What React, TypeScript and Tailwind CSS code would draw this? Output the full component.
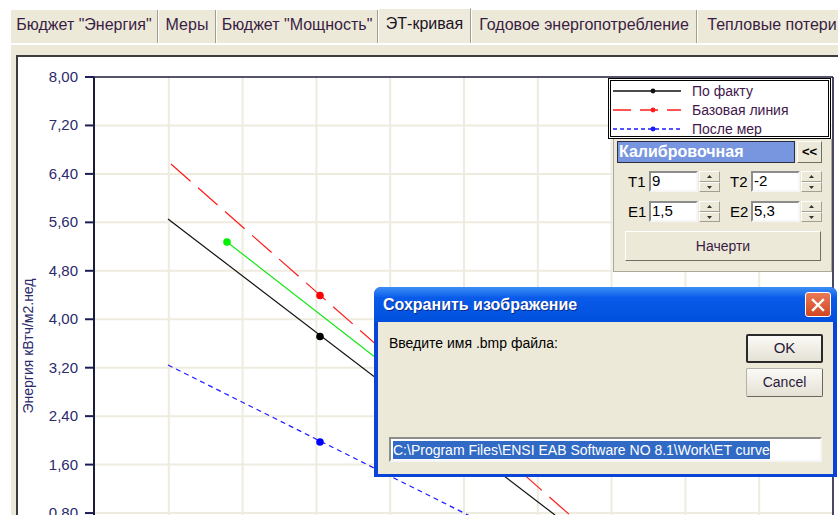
import React from 'react';

// tab strip of the report window
const tabs = [
  { label: 'Бюджет "Энергия"', w: 'w-[148px]' },
  { label: 'Меры', w: 'w-[58px]' },
  { label: 'Бюджет "Мощность"', w: 'w-[162px]' },
  { label: 'ЭТ-кривая', w: 'w-[93px]', active: true },
  { label: 'Годовое энергопотребление', w: 'w-[226px]' },
  { label: 'Тепловые потери', w: 'w-[150px]' },
];

const yTicks = ['8,00', '7,20', '6,40', '5,60', '4,80', '4,00', '3,20', '2,40', '1,60', '0,80'];

const PLOT_LEFT = 95;
const PLOT_TOP = 77;
const PLOT_RIGHT = 833;
const COL = 73.8;
const ROW = 48.45;

const EtChart: React.FC = () => (
  <svg width="830" height="470" viewBox="18 57 830 470" className="block">
    {/* grid */}
    {Array.from({ length: 9 }, (_, i) => (
      <line key={'v' + i} x1={PLOT_LEFT + COL * (i + 1)} y1={PLOT_TOP} x2={PLOT_LEFT + COL * (i + 1)} y2={530} stroke="#EEEBDF" strokeWidth={2} />
    ))}
    {Array.from({ length: 9 }, (_, i) => (
      <line key={'h' + i} x1={PLOT_LEFT} y1={PLOT_TOP + ROW * (i + 1)} x2={PLOT_RIGHT} y2={PLOT_TOP + ROW * (i + 1)} stroke="#EEEBDF" strokeWidth={2} />
    ))}

    {/* frame + axis */}
    <line x1={85} y1={PLOT_TOP} x2={PLOT_RIGHT} y2={PLOT_TOP} stroke="#1b1b3a" strokeWidth={1.6} />
    <line x1={PLOT_RIGHT} y1={PLOT_TOP} x2={PLOT_RIGHT} y2={530} stroke="#1b1b3a" strokeWidth={1.6} />
    <line x1={94} y1={PLOT_TOP} x2={94} y2={530} stroke="#1b1b3a" strokeWidth={2} />
    {yTicks.map((t, i) => (
      <g key={t}>
        <line x1={85} y1={PLOT_TOP + ROW * i} x2={94} y2={PLOT_TOP + ROW * i} stroke="#1d1d55" strokeWidth={2} />
        <text x={78} y={PLOT_TOP + ROW * i + 5} textAnchor="end" fontSize={15} fill="#2a2a6c" fontFamily="'Liberation Sans', Arial, sans-serif">
          {t}
        </text>
      </g>
    ))}
    <text x={33} y={346} transform="rotate(-90 33 346)" textAnchor="middle" fontSize={14} fill="#2a2a6c" fontFamily="'Liberation Sans', Arial, sans-serif">
      Энергия кВтч/м2.нед
    </text>

    {/* series */}
    <line x1={168} y1={219} x2={555} y2={515} stroke="#111" strokeWidth={1.2} />
    <line x1={171} y1={164} x2={571} y2={516} stroke="#ff1a1a" strokeWidth={1.2} strokeDasharray="26 10" />
    <line x1={227} y1={242} x2={470} y2={431} stroke="#12e812" strokeWidth={1.2} />
    <line x1={168} y1={365} x2={470} y2={516} stroke="#1a1aff" strokeWidth={1.2} strokeDasharray="5 4" />
    <circle cx={320} cy={336.5} r={3.8} fill="#000" />
    <circle cx={320} cy={295.5} r={3.8} fill="#ff0000" />
    <circle cx={227} cy={242} r={3.8} fill="#00f000" />
    <circle cx={320} cy={442} r={3.8} fill="#0000ff" />
  </svg>
);

const legend = [
  { label: 'По факту', color: '#111', dash: undefined },
  { label: 'Базовая линия', color: '#ff1a1a', dash: '18 9' },
  { label: 'После мер', color: '#1a1aff', dash: '4 3' },
];

const Spin: React.FC = () => (
  <div className="ml-[1px] flex h-[21px] w-[21px] flex-col">
    <div className="flex h-[11px] items-center justify-center border border-white border-r-[#a3a091] border-b-[#a3a091] bg-[#ECE9D8]">
      <svg width="5" height="3"><path d="M2.5 0L5 3H0z" fill="#333" /></svg>
    </div>
    <div className="flex h-[10px] items-center justify-center border border-white border-r-[#a3a091] border-b-[#a3a091] bg-[#ECE9D8]">
      <svg width="5" height="3"><path d="M0 0H5L2.5 3z" fill="#333" /></svg>
    </div>
  </div>
);

const Field: React.FC<{ label: string; value: string; first?: boolean }> = ({ label, value, first }) => (
  <div className={first ? 'flex items-center' : 'ml-[10px] flex items-center'}>
    <span className="w-[21px] text-[15px] leading-none text-black">{label}</span>
    <div className="flex h-[21px] w-[49px] items-center border-2 border-t-[#8d8d8d] border-l-[#8d8d8d] border-r-[#f6f6f6] border-b-[#f6f6f6] bg-white pl-[1px] text-[15px] text-black">
      {value}
    </div>
    <Spin />
  </div>
);

export default function App() {
  return (
    <div className="relative h-[515px] w-[838px] overflow-hidden bg-white font-['Liberation_Sans',Arial,sans-serif]">
      <div className="pl-[10px] pt-[8px]">
        {/* tabs */}
        <div className="flex h-[35px] items-end">
          {tabs.map((t) =>
            t.active ? (
              <div key={t.label} className={`${t.w} flex h-[35px] shrink-0 items-center justify-center border-l border-t border-white border-r border-r-[#a19e8e] bg-[#EEEBDD] pb-[4px] text-[16px] text-[#1c1424]`}>
                {t.label}
              </div>
            ) : (
              <div key={t.label} className={`${t.w} flex h-[33px] shrink-0 items-center justify-center border-l border-white border-r border-r-[#a19e8e] bg-[#ECE9D8] pb-[3px] text-[16px] text-[#3a1d44]`}>
                {t.label}
              </div>
            )
          )}
        </div>

        {/* tab page */}
        <div className="h-[480px] border-l border-t-2 border-white bg-[#ECE9D8] pl-[5px] pt-[10px]">
          <div className="relative h-[470px] w-[850px] border-2 border-[#3c3c3c] border-r-0 border-b-0 bg-white">
            <EtChart />

            {/* legend + calibration box */}
            <div className="absolute left-[590px] top-[21px] flex flex-col">
              <div className="h-[61px] w-[223px] border-[3px] border-double border-black bg-white">
                {legend.map((l) => (
                  <div key={l.label} className="flex h-[19px] items-center">
                    <svg width="68" height="8" className="ml-[2px]">
                      <line x1={0} y1={4} x2={68} y2={4} stroke={l.color} strokeWidth={1.3} strokeDasharray={l.dash} />
                      <circle cx={40} cy={4} r={2.4} fill={l.color} />
                    </svg>
                    <span className="ml-[11px] text-[14px] leading-none text-[#42184c]">{l.label}</span>
                  </div>
                ))}
              </div>
              <div className="ml-[5px] h-[133px] w-[219px] border border-t-0 border-[#aca899] bg-[#ECE9D8] pl-[3px] pt-[2px]">
                <div className="flex">
                  <div className="flex h-[22px] w-[178px] items-center border border-[#2c2c44] bg-[#7896e0] pl-[1px] text-[16px] font-bold text-white">
                    Калибровочная
                  </div>
                  <div className="ml-[2px] flex h-[22px] w-[25px] items-center justify-center border border-white border-r-[#716f64] border-b-[#716f64] bg-[#ECE9D8] text-[13px] font-bold text-black">
                    &lt;&lt;
                  </div>
                </div>
                <div className="ml-[11px] mt-[8px] flex">
                  <Field label="T1" value="9" first />
                  <Field label="T2" value="-2" />
                </div>
                <div className="ml-[11px] mt-[9px] flex">
                  <Field label="E1" value="1,5" first />
                  <Field label="E2" value="5,3" />
                </div>
                <div className="ml-[8px] mt-[9px] flex h-[30px] w-[196px] items-center justify-center border border-white border-r-[#716f64] border-b-[#716f64] bg-[#ECE9D8] text-[14px] text-[#3a1d44]">
                  Начерти
                </div>
              </div>
            </div>
          </div>
        </div>
      </div>

      {/* save dialog */}
      <div className="absolute left-[374px] top-[287px] flex h-[190px] w-[463px] flex-col overflow-hidden rounded-t-[7px] bg-[#0a44d6]">
        <div className="flex h-[35px] shrink-0 items-center justify-between bg-linear-to-b from-[#3d8ff6] via-[#0a5be9] via-30% to-[#0050dd] pl-[9px] pr-[6px]">
          <span className="text-[16px] font-bold text-white [text-shadow:1px_1px_0_#0b2a8a]">Сохранить изображение</span>
          <div className="flex h-[25px] w-[26px] items-center justify-center rounded-[3px] border border-white bg-linear-to-b from-[#ea7a55] to-[#d2441f]">
            <svg width="14" height="14" viewBox="0 0 14 14">
              <path d="M2 2L12 12M12 2L2 12" stroke="#fff" strokeWidth={2.4} strokeLinecap="square" />
            </svg>
          </div>
        </div>
        <div className="mx-[4px] mb-[3px] flex flex-1 flex-col bg-[#ECE9D8] pl-[11px] pr-[10px] pt-[12px]">
          <div className="flex justify-between">
            <span className="mt-[1px] text-[14px] leading-[16px] text-black">Введите имя .bmp файла:</span>
            <div className="flex w-[77px] flex-col gap-[5px]">
              <div className="flex h-[29px] items-center justify-center rounded-[2px] border-2 border-[#2a2a2a] bg-linear-to-b from-[#fbfaf6] to-[#e4e1d4] text-[15px] text-[#2a1a3a]">
                OK
              </div>
              <div className="flex h-[29px] items-center justify-center rounded-[2px] border border-[#b4b2a6] border-r-[#6a685e] border-b-[#6a685e] bg-linear-to-b from-[#fbfaf6] to-[#e4e1d4] text-[14px] text-[#2a1a3a]">
                Cancel
              </div>
            </div>
          </div>
          <div className="mt-[40px] mr-[1px] flex h-[25px] items-center border-2 border-t-[#8d8d8d] border-l-[#8d8d8d] border-r-[#f6f6f6] border-b-[#f6f6f6] bg-white pl-[2px]">
            <span className="bg-[#316AC5] text-[14px] leading-[18px] text-white">
              C:\Program Files\ENSI EAB Software NO 8.1\Work\ET curve
            </span>
          </div>
        </div>
      </div>
    </div>
  );
}
